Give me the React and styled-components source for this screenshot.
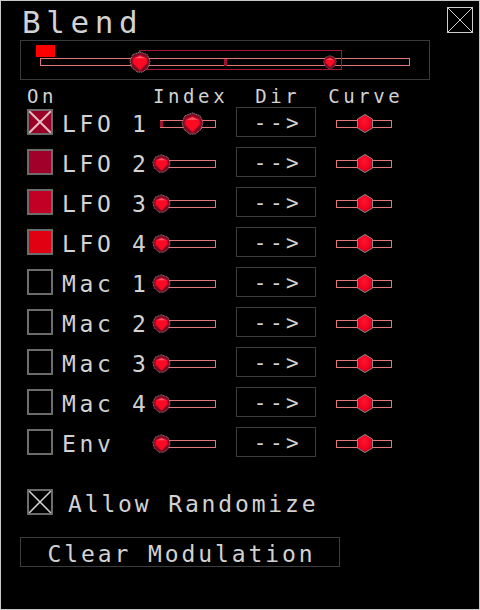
import React, { useId } from 'react'
import styled, { createGlobalStyle } from 'styled-components'

const GlobalStyle = createGlobalStyle`
  html, body { margin: 0; padding: 0; background: #000; }
  * { box-sizing: border-box; }
`

const Window = styled.div`
  width: 480px;
  height: 610px;
  background: #000;
  border: 1px solid #c8c8c8;
  padding: 3px 6px 0 19px;
  font-family: 'DejaVu Sans Mono', 'Liberation Mono', monospace;
  color: #d2d2d2;
  display: flex;
  flex-direction: column;
`
const TitleRow = styled.div`
  display: flex;
  justify-content: space-between;
  align-items: flex-start;
  height: 36px;
`
const Title = styled.div`
  font-size: 31px;
  line-height: 36px;
  letter-spacing: 5.6px;
  padding-left: 2px;
`
const CloseBox = styled.div`
  width: 26px;
  height: 26px;
  margin-top: 3px;
  border: 1px solid #cfcfcf;
  display: flex;
  svg { display: block; }
`
const Panel = styled.div`
  position: relative;
  width: 410px;
  height: 40px;
  border: 1px solid #3a3a3a;
`
const MainTrack = styled.div`
  width: 370px;
  height: 8px;
  margin: 17px 0 0 19px;
  border: 1px solid #e07878;
`
const Marker = styled.div`
  position: absolute;
  left: 15px;
  top: 4px;
  width: 19px;
  height: 12px;
  background: #ff0000;
`
const Range = styled.div`
  position: absolute;
  top: 9px;
  height: 20px;
  border: 1px solid #a51535;
`
const Tick = styled.div`
  position: absolute;
  width: 3px;
  height: 7px;
  background: #a01030;
`
const Knob = styled.div`
  position: absolute;
  width: ${p => p.$w}px;
  height: ${p => p.$h}px;
  svg { display: block; width: 100%; height: 100%; }
`
const Cols = `
  display: grid;
  grid-template-columns: 35px 88px 86px 100px 56px;
  margin-left: 7px;
`
const Header = styled.div`
  ${Cols}
  height: 22px;
  margin: 5px 0 -5px 7px;
  font-size: 19px;
  line-height: 22px;
  letter-spacing: 3.6px;
  white-space: nowrap;
`
const HeadCell = styled.div`
  display: flex;
  justify-content: ${p => (p.$center ? 'center' : 'flex-start')};
  padding-left: ${p => p.$pad || 0}px;
`
const Table = styled.div`
  ${Cols}
  grid-auto-rows: 40px;
  align-items: start;
`
const Box = styled.div`
  width: 26px;
  height: 26px;
  margin-top: 7px;
  border: 2px solid #6c6c6c;
  background: ${p => p.$fill || 'transparent'};
  svg { display: block; }
`
const Label = styled.div`
  margin-top: 4px;
  font-size: 23px;
  line-height: 36px;
  letter-spacing: 3.65px;
  white-space: nowrap;
`
const Track = styled.div`
  position: relative;
  width: 56px;
  height: 8px;
  margin: 18px 0 0 ${p => p.$left}px;
  border: 1px solid #e07878;
`
const DirButton = styled.div`
  width: 80px;
  height: 30px;
  margin-top: 5px;
  border: 1px solid #3c3c3c;
  display: flex;
  align-items: center;
  justify-content: center;
  padding: 2px 0 0 4px;
  font-size: 21px;
  letter-spacing: 3.5px;
`
const AllowRow = styled.div`
  display: flex;
  align-items: center;
  margin: 27px 0 0 7px;
  height: 26px;
`
const AllowBox = styled(Box)`
  margin-top: 0;
`
const AllowText = styled.div`
  margin-left: 15px;
  padding-top: 3px;
  font-size: 23px;
  line-height: 26px;
  letter-spacing: 2.85px;
  white-space: nowrap;
`
const ClearButton = styled.div`
  margin-top: 22px;
  width: 320px;
  height: 30px;
  border: 1px solid #3c3c3c;
  display: flex;
  align-items: center;
  justify-content: center;
  padding: 3px 0 0 3px;
  font-size: 23px;
  line-height: 26px;
  letter-spacing: 2.9px;
`

const Cross = ({ size, color, width = 1 }) => (
  <svg width={size} height={size} viewBox={`0 0 ${size} ${size}`}>
    <line x1="0" y1="0" x2={size} y2={size} stroke={color} strokeWidth={width} />
    <line x1={size} y1="0" x2="0" y2={size} stroke={color} strokeWidth={width} />
  </svg>
)

const Shield = () => (
  <svg viewBox="-12 -12 24 24">
    <polygon
      points="0,-11 8,-8 11,-1 9,6 3,11 -3,11 -9,6 -11,-1 -8,-8"
      fill="#7c0a20"
      stroke="#9a9a9a"
      strokeWidth="1"
      strokeDasharray="1.2 0.8"
    />
    <polygon points="-8,-5 0,-8.5 8,-5 9,1 0,10 -9,1" fill="#a80c2a" />
    <polygon points="-7,-4 0,-7 7,-4 7.5,1 0,8.5 -7.5,1" fill="#ff0a22" />
    <polygon points="-6,-4 0,-6.5 6,-4" fill="#ff5a6a" />
  </svg>
)

const Hex = () => {
  const id = useId().replace(/:/g, '')
  return (
    <svg viewBox="-8 -9.5 16 19">
      <defs>
        <radialGradient id={id} cx="0.45" cy="0.4" r="0.6">
          <stop offset="0" stopColor="#ff1530" />
          <stop offset="0.7" stopColor="#f00020" />
          <stop offset="1" stopColor="#b0001c" />
        </radialGradient>
      </defs>
      <polygon
        points="0,-9 7.5,-4.5 7.5,4.5 0,9 -7.5,4.5 -7.5,-4.5"
        fill={`url(#${id})`}
        stroke="#8a8a8a"
        strokeWidth="1"
      />
    </svg>
  )
}

const rows = [
  { name: 'LFO 1', fill: '#9a0026', checked: true, index: 0.58, big: true },
  { name: 'LFO 2', fill: '#a0002a', index: 0 },
  { name: 'LFO 3', fill: '#c20026', index: 0 },
  { name: 'LFO 4', fill: '#e00012', index: 0 },
  { name: 'Mac 1', index: 0 },
  { name: 'Mac 2', index: 0 },
  { name: 'Mac 3', index: 0 },
  { name: 'Mac 4', index: 0 },
  { name: 'Env', index: 0 },
]

const IndexSlider = ({ value, big }) => {
  const s = big ? 23 : 19
  return (
    <Track $left={10}>
      {big && <Tick style={{ left: -1, top: 0, height: 6 }} />}
      <Knob $w={s} $h={s} style={{ left: value * 54 - s / 2, top: big ? -9 : -7 }}>
        <Shield />
      </Knob>
    </Track>
  )
}

const CurveSlider = ({ value }) => (
  <Track $left={0}>
    <Knob $w={16} $h={19} style={{ left: value * 54 - 8, top: -7.2 }}>
      <Hex />
    </Knob>
  </Track>
)

export default function App() {
  return (
    <>
      <GlobalStyle />
      <Window>
        <TitleRow>
          <Title>Blend</Title>
          <CloseBox>
            <Cross size={24} color="#cfcfcf" />
          </CloseBox>
        </TitleRow>

        <Panel>
          <MainTrack />
          <Marker />
          <Range style={{ left: 118, width: 203 }} />
          <Tick style={{ left: 203, top: 18 }} />
          <Knob $w={22} $h={22} style={{ left: 107.5, top: 10 }}>
            <Shield />
          </Knob>
          <Knob $w={14} $h={14} style={{ left: 301.5, top: 14 }}>
            <Shield />
          </Knob>
        </Panel>

        <Header>
          <HeadCell>On</HeadCell>
          <HeadCell />
          <HeadCell $pad={3}>Index</HeadCell>
          <HeadCell style={{ width: 80 }} $center $pad={3.6}>Dir</HeadCell>
          <HeadCell $center $pad={3.6}>Curve</HeadCell>
        </Header>

        <Table>
          {rows.map(r => (
            <React.Fragment key={r.name}>
              <Box $fill={r.fill}>
                {r.checked && <Cross size={22} color="#e6bcc4" width={2} />}
              </Box>
              <Label>{r.name}</Label>
              <IndexSlider value={r.index} big={r.big} />
              <DirButton>--&gt;</DirButton>
              <CurveSlider value={0.52} />
            </React.Fragment>
          ))}
        </Table>

        <AllowRow>
          <AllowBox>
            <Cross size={22} color="#d4d4d4" width={1.5} />
          </AllowBox>
          <AllowText>Allow Randomize</AllowText>
        </AllowRow>

        <ClearButton>Clear Modulation</ClearButton>
      </Window>
    </>
  )
}
